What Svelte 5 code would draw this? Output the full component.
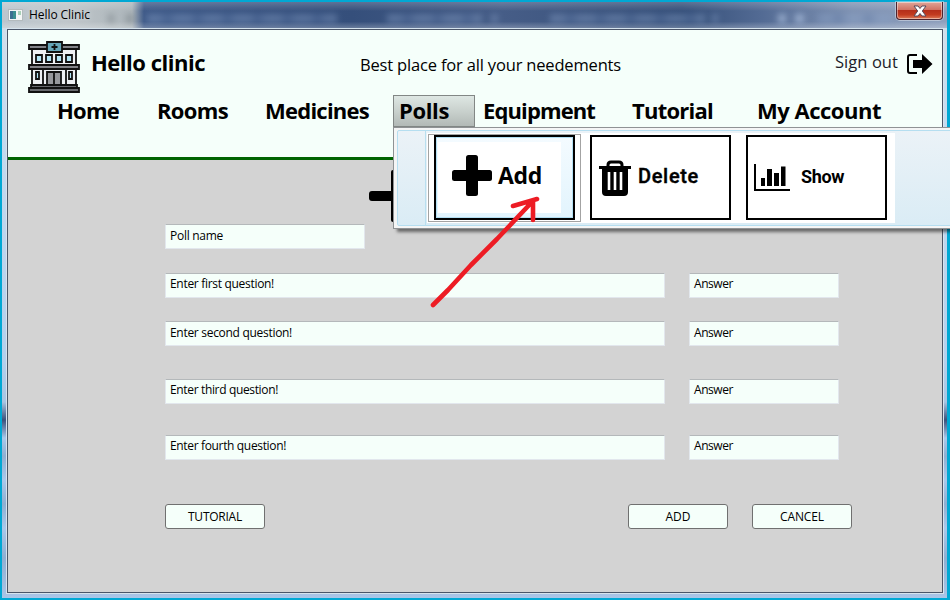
<script>
  const menu = [
    { label: 'Home', width: 62, gap: 38 },
    { label: 'Rooms', width: 71, gap: 37 },
    { label: 'Medicines', width: 104, gap: 24 },
    { label: 'Polls', width: 50, open: true, gap: 8 },
    { label: 'Equipment', width: 112, gap: 37 },
    { label: 'Tutorial', width: 81, gap: 44 },
    { label: 'My Account', width: 124, gap: 0 }
  ];

  const questions = [
    { text: 'Enter first question!', width: 104, gap: 24, drop: 0 },
    { text: 'Enter second question!', width: 122, gap: 23, drop: 1 },
    { text: 'Enter third question!', width: 108, gap: 33, drop: 0 },
    { text: 'Enter fourth question!', width: 116, gap: 31, drop: 0 }
  ];

  // Tracks a label out or in so that it fills its column width.
  function fit(node, width) {
    const natural = node.getBoundingClientRect().width;
    node.style.letterSpacing = `${(width - natural) / node.textContent.length}px`;
  }
</script>

<div class="window">
  <div class="titlebar">
    <svg class="appicon" width="15" height="12" viewBox="0 0 15 12">
      <rect x=".5" y=".5" width="14" height="11" fill="#f4f6f6" stroke="#b3babd" />
      <rect x="2" y="2" width="6" height="8" fill="#3b8f90" />
      <rect x="2" y="2" width="3" height="8" fill="#3c6f91" />
      <rect x="10" y="2" width="3" height="4" fill="#a8d0b8" />
    </svg>
    <span class="title"><span use:fit={61}>Hello Clinic</span></span>
    <div class="ghosts" aria-hidden="true">
      <i class="dark" style:left="106px" style:width="6px"></i>
      <i class="dark" style:left="124px" style:width="8px"></i>
      <i style:left="145px" style:width="190px"></i>
      <i style:left="385px" style:width="95px"></i>
      <i style:left="489px" style:width="7px"></i>
      <i style:left="548px" style:width="155px"></i>
      <i style:left="710px" style:width="6px"></i>
      <i class="bright" style:left="776px" style:width="8px"></i>
      <i class="bright" style:left="793px" style:width="9px"></i>
      <i style:left="816px" style:width="74px"></i>
    </div>
    <div class="close">
      <svg width="14" height="12" viewBox="0 0 14 12">
        <path d="M1 1h4l2 2.500L9 1h4L9.300 6l3.700 5H9L7 8.500 5 11H1l3.700-5z" fill="#fff" stroke="#58495a" />
      </svg>
    </div>
  </div>

  <div class="client">
    <header>
      <div class="brandrow">
        <svg class="logo" width="52" height="52" viewBox="0 0 52 52">
          <g stroke="#111" stroke-width="1.800">
            <path d="M4 7h44v37H4z" fill="#eef0f3" />
            <path d="M15 24v20M38 24v20" />
            <path d="M1 4h50v4H1zM1 24h50v4H1z" fill="#828388" />
            <path d="M3 44h46v3H3zM1 47h50v4H1z" fill="#68696e" />
            <path d="M19 1h15v10H19z" fill="#66a6b8" />
            <path d="M19 31h14v13H19z" fill="#97989c" />
            <path d="M26 31v13" />
            <path d="M8 14h6v7H8zM18 14h6v7h-6zM28 14h6v7h-6zM38 14h6v7h-6zM8 31h3v7H8zM41 31h3v7h-3z" fill="#b4e5f5" />
            <path d="M26.500 3v6M23.500 6h6" />
          </g>
        </svg>
        <h1><span use:fit={114}>Hello clinic</span></h1>
        <p class="tagline"><span use:fit={261}>Best place for all your needements</span></p>
        <div class="signout">
          <span use:fit={63}>Sign out</span>
          <svg width="26" height="20" viewBox="0 0 26 20">
            <path d="M10 1H3Q1 1 1 3v14q0 2 2 2h7" fill="none" stroke="#000" stroke-width="2" />
            <path d="M6 6h9V0l10.500 10L15 20v-6H6z" />
          </svg>
        </div>
      </div>

      <nav>
        {#each menu as item}
          <div class="item" class:open={item.open} style:margin-right="{item.gap}px">
            <span use:fit={item.width}>{item.label}</span>
          </div>
        {/each}
      </nav>
    </header>

    <main>
      <svg class="bigplus" width="56" height="52" viewBox="0 0 56 52">
        <rect x="0" y="21" width="55" height="10" rx="3" />
        <rect x="22" y="0" width="11" height="52" rx="2" />
      </svg>
      <div class="field name"><span use:fit={53}>Poll name</span></div>
      {#each questions as q}
        <div class="row" style:margin-top="{q.gap}px">
          <div class="field question" style:padding-top="{q.drop}px"><span use:fit={q.width}>{q.text}</span></div>
          <div class="field answer" style:padding-top="{q.drop}px"><span use:fit={39}>Answer</span></div>
        </div>
      {/each}
      <div class="actions">
        <button class="tutorial"><span use:fit={54}>TUTORIAL</span></button>
        <button><span use:fit={25}>ADD</span></button>
        <button><span use:fit={44}>CANCEL</span></button>
      </div>
    </main>
  </div>

  <div class="popup">
    <div class="popup-inner">
      <div class="strip"></div>
      <div class="choices">
        <div class="focus">
          <div class="choice hot">
            <div class="add">
              <svg width="40" height="41" viewBox="0 0 40 41">
                <rect x="0" y="15" width="40" height="11" rx="2.500" />
                <rect x="14" y="0" width="12" height="41" rx="2.500" />
              </svg>
              <span use:fit={44}>Add</span>
            </div>
          </div>
        </div>
        <div class="choice delete">
          <svg width="32" height="36" viewBox="0 0 32 36">
            <path d="M9 7V5q0-3 3-3h8q3 0 3 3v2" fill="none" stroke="#000" stroke-width="3" />
            <path d="M0 6h32v3h-3v23q0 4-4 4H7q-4 0-4-4V9H0z" />
            <path d="M10 12v18M16 12v18M22 12v18" stroke="#fff" stroke-width="2.600" />
          </svg>
          <span use:fit={61}>Delete</span>
        </div>
        <div class="choice show">
          <svg width="36" height="27" viewBox="0 0 36 27">
            <path d="M1 0v26h35" fill="none" stroke="#000" stroke-width="2" />
            <path d="M7 14h4v8H7zM13 5h5v17h-5zM20 9h5v13h-5zM27 2.500h4.500V22H27z" />
          </svg>
          <span use:fit={43}>Show</span>
        </div>
      </div>
    </div>
  </div>

  <svg class="pointer" width="112" height="114" viewBox="0 0 112 114">
    <path d="M5 110L20 95L43 70L69 44L103 8M85 11L109 4M105 5V25" fill="none" stroke="#ed1c24" stroke-width="4.600" stroke-linecap="round" stroke-linejoin="round" />
  </svg>
</div>

<style>
  :global(body) { margin: 0; }
  .window {
    position: relative;
    box-sizing: border-box;
    width: 950px;
    height: 600px;
    overflow: hidden;
    padding: 2px 3px 2px 2px;
    box-shadow: inset 2px 2px #00a8d4, inset -3px -2px #00a8d4;
    font-family: "Open Sans", "Noto Sans", sans-serif;
    color: #000;
    background: linear-gradient(#d4dfe9 0, #c8dcef 15%, #b4d0ed 60%, #a8c5e3 67%, #3d527c 70%, #a9c8eb 73%, #8fafd2 76%, #a9c8eb 80%, #8fafd2 84%, #a9c8eb 88%, #8fafd2 93%, #abc6e8);
  }
  .titlebar {
    position: relative;
    display: flex;
    align-items: flex-start;
    height: 26px;
    background:
      linear-gradient(#ffffff33, #ffffff00 35%, #ffffff00 75%, #ffffff40),
      linear-gradient(90deg, #bcc6ce 0, #bdc4c8 70px, #adb6bb 130px, #3f5a88 142px, #354f7b 350px, #465d87 500px, #354f79 680px, #536b94 760px, #7f92b2 850px, #8fa0bd);
  }
  .appicon { margin: 7px 0 0 6px; }
  .title { margin: 4px 0 0 6px; font-size: 12px; line-height: 18px; z-index: 1; }
  .title span { text-shadow: 0 0 6px #ffffffb0; }
  .ghosts i {
    position: absolute;
    top: 12px;
    height: 9px;
    background: repeating-linear-gradient(90deg, #8ca5cb 0 12px, #5d79a8 20px, #8ca5cb 30px);
    opacity: .38;
    filter: blur(3px);
  }
  .ghosts .bright { opacity: .75; background: #a5b9d8; }
  .ghosts .dark { opacity: .45; background: #6d767c; }
  .close {
    position: absolute;
    left: 894px;
    top: 0;
    display: flex;
    justify-content: center;
    align-items: center;
    box-sizing: border-box;
    width: 47px;
    height: 18px;
    border: 1px solid #4b2430;
    border-top: 0;
    border-radius: 0 0 4px 4px;
    background: linear-gradient(#dfa598, #cf7464 45%, #b52f1b 50%, #c23b20 75%, #dd7a58);
    box-shadow: inset 0 0 0 1px #ffffff70, 0 0 0 1px #ffffff60;
  }
  .client {
    box-sizing: border-box;
    width: 936px;
    height: 564px;
    margin: 1px 0 0 5px;
    border: 1px solid #4a5568;
    box-shadow: 0 0 0 1px #d6e4ee;
    background: #d3d3d3;
  }
  header {
    height: 127px;
    background: #f5fffa;
    border-bottom: 3px solid #006400;
  }
  .brandrow { display: flex; height: 65px; }
  .logo { margin: 11px 0 0 20px; }
  h1, p { margin: 0; }
  span { white-space: nowrap; }
  h1 { margin: 17px 0 0 11px; width: 115px; font-size: 22px; line-height: 30px; font-weight: 700; }
  .tagline { width: 262px; margin: 22px 0 0 154px; font-size: 16.500px; line-height: 26px; }
  .signout { display: flex; align-items: flex-start; gap: 9px; margin: 19px 0 0 213px; font-size: 16.500px; line-height: 26px; color: #1c1c28; }
  .signout svg { margin-top: 5px; }
  nav { display: flex; margin-left: 49px; font-size: 22px; font-weight: 700; line-height: 30px; }
  .item { flex: none; height: 32px; box-sizing: border-box; }
  .open { width: 82px; padding: 0 0 0 5px; border: 1px solid #828785; line-height: 28px; background: linear-gradient(#dee7e3, #c7cfcb 55%, #b2b9b6); }
  main { padding: 64px 0 0 157px; position: relative; }
  .bigplus { position: absolute; left: 361px; top: 10px; }
  .field {
    box-sizing: border-box;
    height: 25px;
    padding-left: 4px;
    border: 1px solid #e2e7ed;
    border-top-color: #b4b8ba;
    background: #f5fffa;
    font-size: 12px;
    line-height: 20px;
  }
  .name { width: 200px; line-height: 21px; }
  .row { display: flex; gap: 24px; }
  .question { width: 500px; }
  .answer { width: 150px; }
  .actions { display: flex; gap: 24px; margin-top: 44px; }
  button {
    width: 100px;
    height: 25px;
    padding: 0;
    border: 1px solid #707070;
    border-radius: 3px;
    background: #f5fffa;
    font: 12px/22px "Open Sans", sans-serif;
    color: #000;
  }
  .tutorial { margin-right: 339px; }
  .popup {
    position: absolute;
    left: 393px;
    top: 127px;
    box-sizing: border-box;
    width: 580px;
    height: 102px;
    padding: 2px;
    border: 1px solid #8f9294;
    background: #f4f5f5;
    box-shadow: 4px 3px 3px #00000080;
  }
  .popup-inner {
    display: flex;
    box-sizing: border-box;
    height: 96px;
    margin-left: 1px;
    border: 1px solid #b5def0;
    border-radius: 2px;
    background: linear-gradient(#ebf2f7, #daecf5);
  }
  .strip { width: 27px; border-right: 1px solid #b9dfef; }
  .choices { display: flex; align-items: flex-start; box-sizing: border-box; width: 468px; height: 90px; margin: 2px 0 0 1px; background: #fff; }
  .focus { box-sizing: border-box; width: 153px; height: 88px; padding: 0 0 0 5px; border: 1px solid #a3a3a3; margin: 1px 9px 0 1px; }
  .choice { display: flex; align-items: center; flex: none; box-sizing: border-box; width: 141px; height: 85px; margin-top: 2px; border: 2px solid #000; background: #fff; }
  .hot { margin-top: 0; background: linear-gradient(#f4fbff, #e2f4fd); box-shadow: inset 0 0 0 1px #b3dff3; align-items: flex-start; }
  .add { display: flex; width: 123px; height: 71px; margin: 5px 0 0 2px; background: #fff; }
  .add svg { margin: 13px 0 0 14px; }
  .add span { margin: 17px 0 0 6px; font-size: 23px; line-height: 32px; font-weight: 700; }
  .delete { margin-right: 15px; padding-left: 7px; }
  .delete span { margin: -3px 0 0 7px; font: 500 20px/28px Roboto, sans-serif; -webkit-text-stroke: .4px #000; }
  .show { padding-left: 6px; }
  .show span { margin: -2px 0 0 11px; font: 700 18px/26px Roboto, sans-serif; }
  .pointer { position: absolute; left: 428px; top: 195px; }
</style>
